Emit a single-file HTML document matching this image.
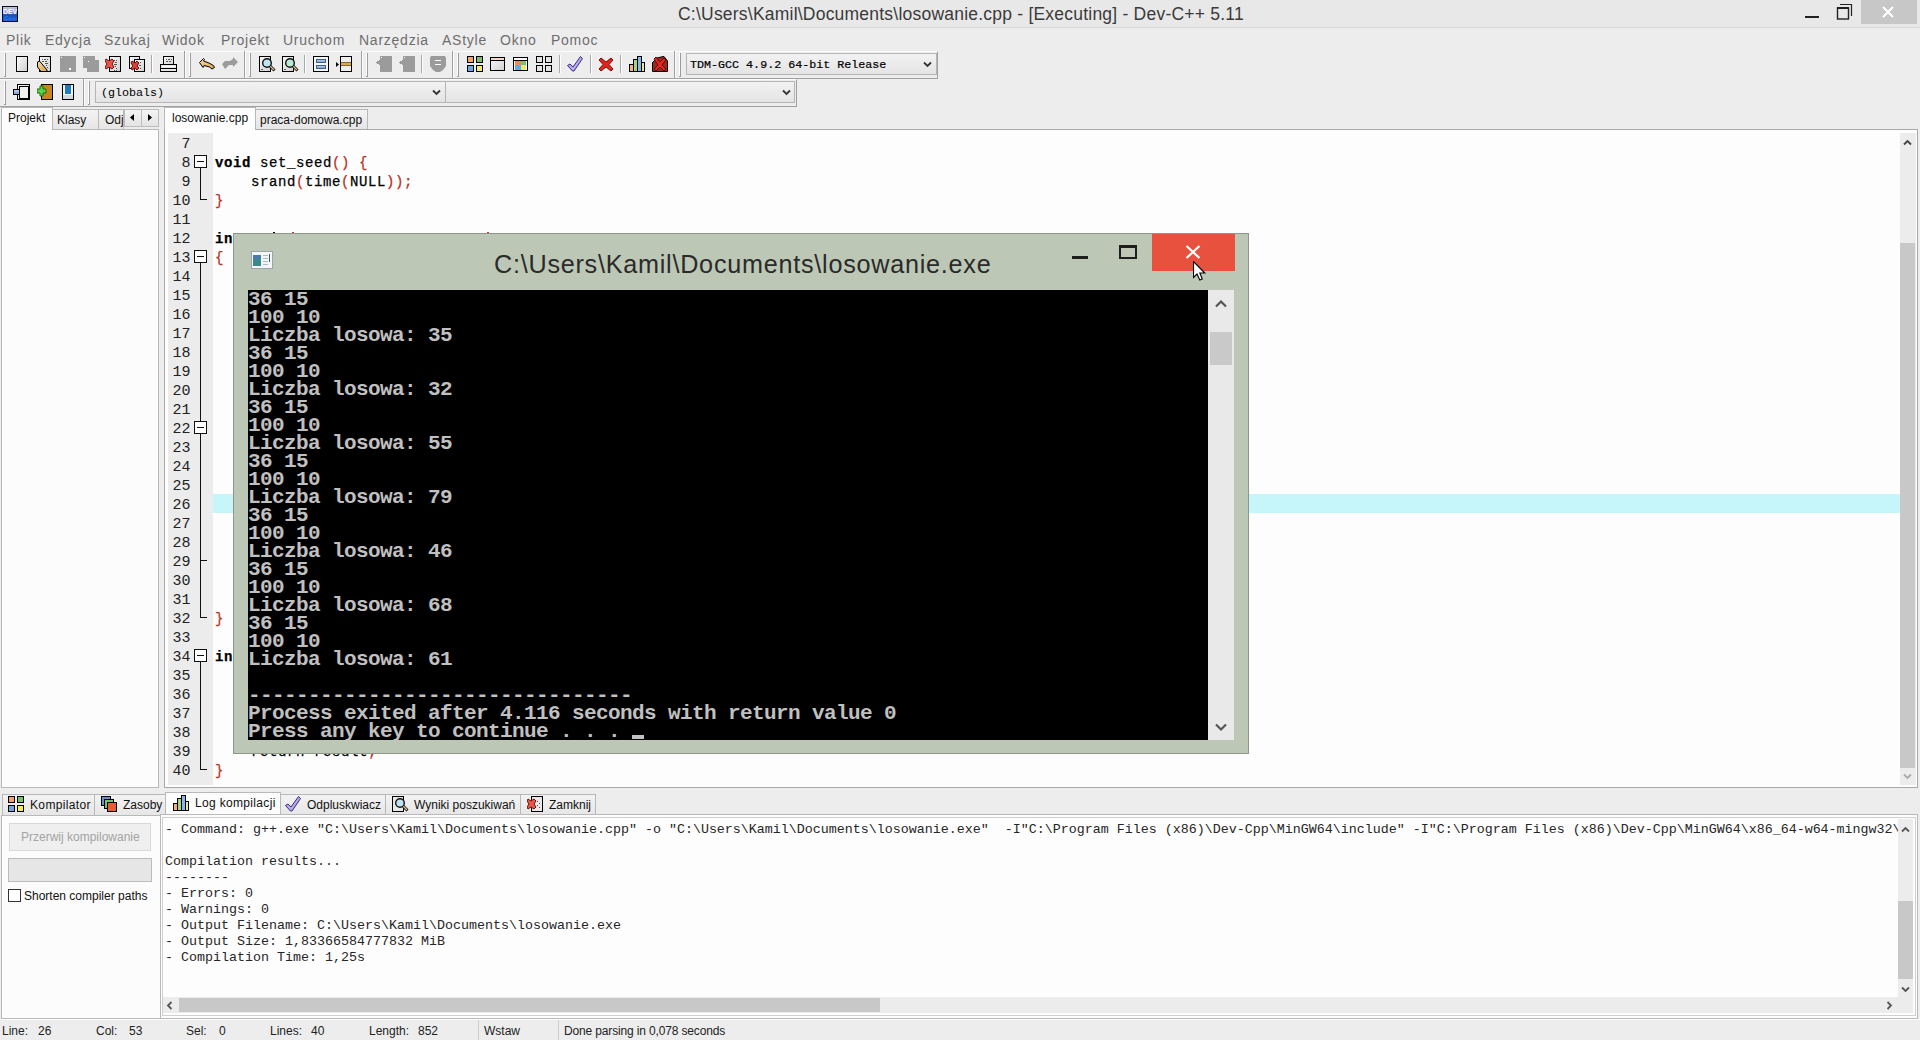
<!DOCTYPE html>
<html><head><meta charset="utf-8">
<style>
*{margin:0;padding:0;box-sizing:border-box}
html,body{width:1920px;height:1040px;overflow:hidden;background:#ededed;font-family:"Liberation Sans",sans-serif;font-size:12px;color:#000}
.a{position:absolute}
.t{position:absolute;white-space:pre;font-family:"Liberation Sans",sans-serif;line-height:1}
.m{position:absolute;white-space:pre;font-family:"Liberation Mono",monospace;line-height:1}
.menu{font-size:14px;letter-spacing:0.75px;color:#6d6d6d;top:33px}
.grip{position:absolute;width:3px;border-left:1px solid #fff;border-right:1px solid #a0a0a0;}
.sep{position:absolute;width:2px;border-left:1px solid #a9a9a9;border-right:1px solid #fff}
.ic{position:absolute;width:16px;height:16px}
.tab{position:absolute;background:linear-gradient(#f3f3f3,#e6e6e6);border:1px solid #b8b8b8;border-bottom:none}
.ln{position:absolute;left:168px;width:22.5px;text-align:right;font-family:"Liberation Mono",monospace;font-size:15px;letter-spacing:0px;line-height:19px;color:#222}
.code{position:absolute;left:215px;font-family:"Liberation Mono",monospace;font-size:14px;letter-spacing:0.6px;line-height:19px;white-space:pre;color:#000;-webkit-text-stroke:0.25px currentColor}
.r{color:#b8301c}
.b{font-weight:bold}
.con{position:absolute;left:248px;top:290px;width:960px;height:450px;background:#000;overflow:hidden;padding-top:1px;font-family:"Liberation Mono",monospace;font-weight:bold;font-size:21px;letter-spacing:-0.6px;line-height:18px;color:#c0c0c0;white-space:pre}
.log{position:absolute;left:165px;font-family:"Liberation Mono",monospace;font-size:13.33px;line-height:16px;white-space:pre;color:#262626}
.st{position:absolute;top:1025px;font-size:12px;color:#222;white-space:pre;line-height:1}
</style></head><body>
<!-- ============ TITLE BAR ============ -->
<div class="a" style="left:0;top:0;width:1920px;height:28px;background:#e8e8e8;border-bottom:1px solid #d6d6d6"></div>
<svg class="a" style="left:2px;top:6px" width="16" height="16" viewBox="0 0 16 16">
<defs><linearGradient id="devg" x1="0" y1="0" x2="0" y2="1"><stop offset="0" stop-color="#c8ccd8"/><stop offset="0.45" stop-color="#8090b8"/><stop offset="0.55" stop-color="#1a50b0"/><stop offset="1" stop-color="#1f6cd8"/></linearGradient></defs>
<rect x="0.5" y="0.5" width="15" height="15" fill="url(#devg)" stroke="#050a20"/>
<text x="8" y="7.6" font-family="Liberation Sans" font-size="6.8" font-weight="bold" fill="#fff" text-anchor="middle">DEV</text>
<text x="8" y="13.5" font-family="Liberation Sans" font-size="6" font-weight="bold" fill="#2a78e0" text-anchor="middle">C++</text>
</svg>
<div class="t" id="title" style="left:678px;top:6px;font-size:17.5px;letter-spacing:0.22px;color:#3a3a3a">C:\Users\Kamil\Documents\losowanie.cpp - [Executing] - Dev-C++ 5.11</div>
<div class="a" style="left:1805px;top:16px;width:14px;height:2px;background:#222"></div>
<svg class="a" style="left:1836px;top:3px" width="18" height="18" viewBox="0 0 18 18">
<path d="M4 1.5 H15.5 V13" fill="none" stroke="#222" stroke-width="1.2"/>
<rect x="1.5" y="5" width="11" height="11" fill="none" stroke="#222" stroke-width="1.4"/>
<rect x="1" y="4" width="12" height="2" fill="#222"/>
</svg>
<div class="a" style="left:1861px;top:0;width:56px;height:24px;background:#c7c7c7"></div>
<svg class="a" style="left:1880px;top:4px" width="16" height="16" viewBox="0 0 16 16"><path d="M3 3 L13 13 M13 3 L3 13" stroke="#fff" stroke-width="2"/></svg>

<!-- ============ MENU ============ -->
<div class="t menu" style="left:6px">Plik</div>
<div class="t menu" style="left:45px">Edycja</div>
<div class="t menu" style="left:104px">Szukaj</div>
<div class="t menu" style="left:162px">Widok</div>
<div class="t menu" style="left:221px">Projekt</div>
<div class="t menu" style="left:283px">Uruchom</div>
<div class="t menu" style="left:359px">Narzędzia</div>
<div class="t menu" style="left:442px">AStyle</div>
<div class="t menu" style="left:500px">Okno</div>
<div class="t menu" style="left:551px">Pomoc</div>

<!-- ============ TOOLBAR ROW 1 ============ -->
<div class="a" style="left:0;top:51px;width:938px;height:28px;border-top:1px solid #fcfcfc;border-bottom:1px solid #a0a0a0;border-right:1px solid #a0a0a0"></div>
<div class="a" style="left:0;top:79px;width:797px;height:28px;border-top:1px solid #fcfcfc;border-bottom:1px solid #a0a0a0;border-right:1px solid #a0a0a0"></div>
<div class="a" style="left:184px;top:51px;width:1px;height:27px;background:#a0a0a0"></div><div class="a" style="left:185px;top:51px;width:1px;height:27px;background:#fcfcfc"></div>
<div class="a" style="left:244px;top:51px;width:1px;height:27px;background:#a0a0a0"></div><div class="a" style="left:245px;top:51px;width:1px;height:27px;background:#fcfcfc"></div>
<div class="a" style="left:361px;top:51px;width:1px;height:27px;background:#a0a0a0"></div><div class="a" style="left:362px;top:51px;width:1px;height:27px;background:#fcfcfc"></div>
<div class="a" style="left:452px;top:51px;width:1px;height:27px;background:#a0a0a0"></div><div class="a" style="left:453px;top:51px;width:1px;height:27px;background:#fcfcfc"></div>
<div class="a" style="left:674px;top:51px;width:1px;height:27px;background:#a0a0a0"></div><div class="a" style="left:675px;top:51px;width:1px;height:27px;background:#fcfcfc"></div>
<div class="a" style="left:83px;top:79px;width:1px;height:27px;background:#a0a0a0"></div><div class="a" style="left:84px;top:79px;width:1px;height:27px;background:#fcfcfc"></div>
<div class="a" style="left:4px;top:53px;width:1px;height:23px;background:#fff"></div><div class="a" style="left:5px;top:53px;width:1px;height:24px;background:#9c9c9c"></div><div class="a" style="left:4px;top:76px;width:1px;height:1px;background:#9c9c9c"></div>
<div class="a" style="left:189px;top:53px;width:1px;height:23px;background:#fff"></div><div class="a" style="left:190px;top:53px;width:1px;height:24px;background:#9c9c9c"></div><div class="a" style="left:189px;top:76px;width:1px;height:1px;background:#9c9c9c"></div>
<div class="a" style="left:249px;top:53px;width:1px;height:23px;background:#fff"></div><div class="a" style="left:250px;top:53px;width:1px;height:24px;background:#9c9c9c"></div><div class="a" style="left:249px;top:76px;width:1px;height:1px;background:#9c9c9c"></div>
<div class="a" style="left:366px;top:53px;width:1px;height:23px;background:#fff"></div><div class="a" style="left:367px;top:53px;width:1px;height:24px;background:#9c9c9c"></div><div class="a" style="left:366px;top:76px;width:1px;height:1px;background:#9c9c9c"></div>
<div class="a" style="left:457px;top:53px;width:1px;height:23px;background:#fff"></div><div class="a" style="left:458px;top:53px;width:1px;height:24px;background:#9c9c9c"></div><div class="a" style="left:457px;top:76px;width:1px;height:1px;background:#9c9c9c"></div>
<div class="a" style="left:679px;top:53px;width:1px;height:23px;background:#fff"></div><div class="a" style="left:680px;top:53px;width:1px;height:24px;background:#9c9c9c"></div><div class="a" style="left:679px;top:76px;width:1px;height:1px;background:#9c9c9c"></div>
<div class="a" style="left:4px;top:81px;width:1px;height:23px;background:#fff"></div><div class="a" style="left:5px;top:81px;width:1px;height:24px;background:#9c9c9c"></div><div class="a" style="left:4px;top:104px;width:1px;height:1px;background:#9c9c9c"></div>
<div class="a" style="left:88px;top:81px;width:1px;height:23px;background:#fff"></div><div class="a" style="left:89px;top:81px;width:1px;height:24px;background:#9c9c9c"></div><div class="a" style="left:88px;top:104px;width:1px;height:1px;background:#9c9c9c"></div>
<div class="a" style="left:151px;top:55px;width:1px;height:18px;background:#a9a9a9"></div><div class="a" style="left:152px;top:55px;width:1px;height:18px;background:#fff"></div>
<div class="a" style="left:304px;top:55px;width:1px;height:18px;background:#a9a9a9"></div><div class="a" style="left:305px;top:55px;width:1px;height:18px;background:#fff"></div>
<div class="a" style="left:421px;top:55px;width:1px;height:18px;background:#a9a9a9"></div><div class="a" style="left:422px;top:55px;width:1px;height:18px;background:#fff"></div>
<div class="a" style="left:559px;top:55px;width:1px;height:18px;background:#a9a9a9"></div><div class="a" style="left:560px;top:55px;width:1px;height:18px;background:#fff"></div>
<div class="a" style="left:590px;top:55px;width:1px;height:18px;background:#a9a9a9"></div><div class="a" style="left:591px;top:55px;width:1px;height:18px;background:#fff"></div>
<div class="a" style="left:620px;top:55px;width:1px;height:18px;background:#a9a9a9"></div><div class="a" style="left:621px;top:55px;width:1px;height:18px;background:#fff"></div>
<svg width="0" height="0" style="position:absolute"><defs><linearGradient id="gd" x1="0" y1="0" x2="1" y2="1"><stop offset="0" stop-color="#fafafa"/><stop offset="1" stop-color="#cfcfcf"/></linearGradient></defs><defs>
<linearGradient id="gbl" x1="0" y1="0" x2="0" y2="1"><stop offset="0" stop-color="#c9dcf2"/><stop offset="1" stop-color="#6e95c4"/></linearGradient>
<linearGradient id="gtan" x1="0" y1="0" x2="1" y2="1"><stop offset="0" stop-color="#f6dba8"/><stop offset="1" stop-color="#d9a24c"/></linearGradient>
</defs></svg>
<svg class="a" style="left:16px;top:56px" width="12" height="16" viewBox="0 0 12 16" shape-rendering="crispEdges"><rect x="0.5" y="0.5" width="11" height="15" fill="url(#gd)" stroke="#000"/><rect x="1" y="1" width="1" height="14" fill="#fff"/></svg>
<svg class="a" style="left:37px;top:56px" width="14" height="16" viewBox="0 0 14 16" shape-rendering="crispEdges"><rect x="2.5" y="0.5" width="11" height="15" fill="url(#gd)" stroke="#000"/><rect x="5" y="3" width="1" height="1" fill="#555"/><rect x="7" y="3" width="2" height="1" fill="#555"/><rect x="10" y="3" width="1" height="1" fill="#555"/><rect x="5" y="5" width="2" height="1" fill="#555"/><rect x="8" y="5" width="2" height="1" fill="#555"/><rect x="8" y="7" width="2" height="1" fill="#555"/><rect x="10" y="7" width="1" height="1" fill="#555"/><rect x="9" y="9" width="1" height="1" fill="#555"/><rect x="10" y="11" width="1" height="1" fill="#555"/><path d="M0.5 6 L2.5 5 L10 14 L10 15.5 L4 15.5 L0.5 11 Z" fill="url(#gtan)" stroke="#000" shape-rendering="auto"/></svg>
<svg class="a" style="left:60px;top:56px" width="16" height="16" viewBox="0 0 16 16" shape-rendering="crispEdges"><rect x="0" y="0" width="16" height="16" fill="#9b9b9b"/><rect x="1" y="1" width="1" height="1" fill="#fff"/><rect x="9" y="12" width="2" height="2" fill="#fff"/></svg>
<svg class="a" style="left:83px;top:56px" width="16" height="16" viewBox="0 0 16 16" shape-rendering="crispEdges"><rect x="0" y="0" width="12" height="12" fill="#9b9b9b"/><rect x="4" y="4" width="12" height="12" fill="#9b9b9b"/><rect x="1" y="1" width="1" height="1" fill="#fff"/><rect x="5" y="5" width="1" height="1" fill="#fff"/></svg>
<svg class="a" style="left:105px;top:56px" width="16" height="16" viewBox="0 0 16 16" shape-rendering="crispEdges"><rect x="4.5" y="0.5" width="11" height="15" fill="url(#gd)" stroke="#000"/><rect x="9" y="4" width="1" height="1" fill="#555"/><rect x="11" y="4" width="1" height="1" fill="#555"/><rect x="10" y="6" width="2" height="1" fill="#555"/><rect x="9" y="8" width="2" height="1" fill="#555"/><rect x="11" y="8" width="1" height="1" fill="#555"/><rect x="10" y="10" width="1" height="1" fill="#555"/><rect x="11" y="12" width="1" height="1" fill="#555"/><rect x="9" y="14" width="1" height="1" fill="#555"/><rect x="11" y="14" width="1" height="1" fill="#555"/><path d="M1 3 L4 5 L7 3 L9 5 L7 8 L9 11 L7 13 L4 11 L1 13 L0 11 L2 8 L0 5 Z" fill="#e8574a" stroke="#6b0f0f" shape-rendering="auto"/></svg>
<svg class="a" style="left:129px;top:56px" width="16" height="16" viewBox="0 0 16 16" shape-rendering="crispEdges"><rect x="0.5" y="0.5" width="10" height="12" fill="url(#gd)" stroke="#000"/><rect x="5.5" y="3.5" width="10" height="12" fill="url(#gd)" stroke="#000"/><rect x="9" y="6" width="1" height="1" fill="#555"/><rect x="11" y="6" width="1" height="1" fill="#555"/><rect x="10" y="9" width="2" height="1" fill="#555"/><rect x="9" y="12" width="1" height="1" fill="#555"/><rect x="11" y="12" width="1" height="1" fill="#555"/><path d="M3 5 L6 7 L8 5 L10 7 L8 10 L10 12 L8 14 L6 12 L3 14 L2 12 L4 10 L2 7 Z" fill="#d94235" stroke="#6b0f0f" shape-rendering="auto"/></svg>
<svg class="a" style="left:160px;top:56px" width="17" height="16" viewBox="0 0 17 16" shape-rendering="crispEdges"><rect x="3.5" y="0.5" width="10" height="9" fill="url(#gd)" stroke="#000"/><rect x="6" y="3" width="1" height="1" fill="#555"/><rect x="8" y="3" width="2" height="1" fill="#555"/><rect x="11" y="3" width="1" height="1" fill="#555"/><rect x="6" y="5" width="2" height="1" fill="#555"/><rect x="9" y="5" width="2" height="1" fill="#555"/><rect x="0.5" y="8.5" width="16" height="7" rx="1" fill="#e6e6e6" stroke="#000"/><rect x="1" y="12" width="15" height="1" fill="#000"/><rect x="2" y="10" width="13" height="1" fill="#fff"/></svg>
<svg class="a" style="left:199px;top:58px" width="16" height="12" viewBox="0 0 16 12" shape-rendering="crispEdges"><path d="M0.5 4.5 L4.5 0.5 L5.5 1.5 L4.5 3 L10 5 L14.5 7.5 L15.5 9.5 L13 11 L10.5 9 L5 7.5 L4.5 9 L4 9.5 Z" fill="url(#gtan)" stroke="#000" shape-rendering="auto"/></svg>
<svg class="a" style="left:222px;top:57px" width="16" height="13" viewBox="0 0 16 13" shape-rendering="crispEdges"><path d="M0 7 L3 4 L8 4 L11 2 L11 0 L16 5 L11 10 L11 8 L7 8 L3 12 Z" fill="#9b9b9b" shape-rendering="auto"/></svg>
<svg class="a" style="left:259px;top:56px" width="17" height="16" viewBox="0 0 17 16" shape-rendering="crispEdges"><rect x="0.5" y="0.5" width="11" height="15" fill="url(#gd)" stroke="#000"/><rect x="2" y="13" width="2" height="1" fill="#555"/><circle cx="8" cy="7" r="4.3" fill="#bfe3f2" stroke="#111" stroke-width="1.4" shape-rendering="auto"/><path d="M11 10 L15.5 14.5" stroke="#000" stroke-width="2.8" shape-rendering="auto"/><path d="M11.3 10.3 L15 14" stroke="#e0c08a" stroke-width="1.4" shape-rendering="auto"/></svg>
<svg class="a" style="left:282px;top:56px" width="17" height="16" viewBox="0 0 17 16" shape-rendering="crispEdges"><rect x="0.5" y="0.5" width="11" height="15" fill="url(#gd)" stroke="#000"/><rect x="2" y="13" width="2" height="1" fill="#555"/><circle cx="8" cy="7" r="4.3" fill="#b9ead6" stroke="#111" stroke-width="1.4" shape-rendering="auto"/><path d="M11 10 L15.5 14.5" stroke="#000" stroke-width="2.8" shape-rendering="auto"/><path d="M11.3 10.3 L15 14" stroke="#e0c08a" stroke-width="1.4" shape-rendering="auto"/></svg>
<svg class="a" style="left:313px;top:56px" width="16" height="16" viewBox="0 0 16 16" shape-rendering="crispEdges"><rect x="0.5" y="0.5" width="15" height="15" fill="#f5f5f5" stroke="#000"/><rect x="3.5" y="3.5" width="9" height="3" fill="url(#gbl)" stroke="#3d5f8a"/><rect x="3.5" y="9.5" width="9" height="3" fill="url(#gbl)" stroke="#3d5f8a"/></svg>
<svg class="a" style="left:336px;top:56px" width="16" height="16" viewBox="0 0 16 16" shape-rendering="crispEdges"><path d="M0 6 L3 8.5 L0 11 Z" fill="#000" shape-rendering="auto"/><rect x="4.5" y="0.5" width="11" height="15" fill="#eeeeee" stroke="#000"/><rect x="5" y="6" width="10" height="4" fill="#d9a84a"/><rect x="5" y="6" width="10" height="1" fill="#8a6a2a"/><rect x="5" y="9" width="10" height="1" fill="#8a6a2a"/></svg>
<svg class="a" style="left:376px;top:56px" width="16" height="16" viewBox="0 0 16 16" shape-rendering="crispEdges"><path d="M4 0 H16 V16 H4 V9 L1 8 L0 7 L0 6 L1 5 L4 4 Z" fill="#9b9b9b"/><rect x="5" y="1" width="1" height="1" fill="#fff"/></svg>
<svg class="a" style="left:399px;top:56px" width="16" height="16" viewBox="0 0 16 16" shape-rendering="crispEdges"><path d="M4 0 H16 V16 H4 V9 L1 8 L0 7 L0 6 L1 5 L4 4 Z" fill="#9b9b9b"/><rect x="5" y="1" width="1" height="1" fill="#fff"/></svg>
<svg class="a" style="left:430px;top:56px" width="16" height="16" viewBox="0 0 16 16" shape-rendering="crispEdges"><path d="M1 0 H15 L16 2 V10 L13 14 L10 16 H6 L3 14 L0 10 V2 Z" fill="#9b9b9b" shape-rendering="auto"/><rect x="5" y="4" width="6" height="1" fill="#fff"/><rect x="5" y="8" width="6" height="1" fill="#fff"/></svg>
<svg class="a" style="left:467px;top:56px" width="16" height="16" viewBox="0 0 16 16" shape-rendering="crispEdges"><rect x="0.5" y="0.5" width="6" height="6" fill="#f2a36a" stroke="#000"/><rect x="9.5" y="0.5" width="6" height="6" fill="#7cc06a" stroke="#000"/><rect x="0.5" y="9.5" width="6" height="6" fill="#6aa6e0" stroke="#000"/><rect x="9.5" y="9.5" width="6" height="6" fill="#f2ea6a" stroke="#000"/></svg>
<svg class="a" style="left:490px;top:57px" width="15" height="14" viewBox="0 0 15 14" shape-rendering="crispEdges"><rect x="0.5" y="0.5" width="14" height="13" fill="url(#gd)" stroke="#000"/><rect x="1" y="1" width="13" height="2" fill="#f6d8c8"/><rect x="1" y="3" width="13" height="1" fill="#000"/></svg>
<svg class="a" style="left:513px;top:57px" width="15" height="14" viewBox="0 0 15 14" shape-rendering="crispEdges"><rect x="0.5" y="0.5" width="14" height="13" fill="#fff" stroke="#000"/><rect x="1" y="3" width="13" height="1" fill="#000"/><rect x="2" y="4" width="6" height="4" fill="#f08a5a"/><rect x="8" y="4" width="5" height="4" fill="#7cc06a"/><rect x="2" y="8" width="6" height="5" fill="#6aa6e0"/><rect x="8" y="8" width="5" height="5" fill="#f2ea6a"/></svg>
<svg class="a" style="left:536px;top:56px" width="16" height="16" viewBox="0 0 16 16" shape-rendering="crispEdges"><rect x="0.5" y="0.5" width="6" height="6" fill="#e4e4e4" stroke="#000"/><rect x="9.5" y="0.5" width="6" height="6" fill="#e4e4e4" stroke="#000"/><rect x="0.5" y="9.5" width="6" height="6" fill="#e4e4e4" stroke="#000"/><rect x="9.5" y="9.5" width="6" height="6" fill="#e4e4e4" stroke="#000"/></svg>
<svg class="a" style="left:567px;top:56px" width="16" height="16" viewBox="0 0 16 16" shape-rendering="crispEdges"><path d="M0.5 9.5 L3 8 L6 11 L13.5 0.5 L15.5 2.5 L7 15 L5.5 15 Z" fill="#b7a9ee" stroke="#3b2a7a" shape-rendering="auto"/></svg>
<svg class="a" style="left:598px;top:57px" width="16" height="15" viewBox="0 0 16 15" shape-rendering="crispEdges"><path d="M1 3 L3 1 L8 5 L13 1 L15 3 L11 7.5 L15 12 L13 14 L8 10 L3 14 L1 12 L5 7.5 Z" fill="#e0261b" stroke="#7a0e0a" shape-rendering="auto"/></svg>
<svg class="a" style="left:629px;top:56px" width="16" height="16" viewBox="0 0 16 16" shape-rendering="crispEdges"><rect x="0.5" y="8.5" width="4" height="7" fill="#f0b080" stroke="#000"/><rect x="4.5" y="3.5" width="4" height="12" fill="#a8d08a" stroke="#000"/><rect x="8.5" y="0.5" width="4" height="15" fill="#88b8e8" stroke="#000"/><rect x="12.5" y="6.5" width="3" height="9" fill="#f0e890" stroke="#000"/></svg>
<svg class="a" style="left:652px;top:56px" width="16" height="16" viewBox="0 0 16 16" shape-rendering="crispEdges"><path d="M0.5 6.5 L5 2 L9 1 L12 0.5 L15.5 5 L15.5 15.5 L0.5 15.5 Z" fill="#9b2a20" stroke="#000" shape-rendering="auto"/><path d="M2 3 L4 1 L8 6 L12 2 L14 4 L10 9 L14 13 L12 15 L8 11 L4 15 L2 13 L6 9 Z" fill="#e8261c" stroke="#5a0a06" shape-rendering="auto"/></svg>
<svg class="a" style="left:13px;top:84px" width="17" height="16" viewBox="0 0 17 16" shape-rendering="crispEdges"><rect x="4.5" y="0.5" width="12" height="15" fill="url(#gd)" stroke="#000"/><rect x="6" y="2" width="9" height="12" fill="#f0f0f0" stroke="#000" stroke-width="1"/><rect x="0.5" y="5.5" width="6" height="5" fill="url(#gbl)" stroke="#000"/></svg>
<svg class="a" style="left:37px;top:84px" width="16" height="16" viewBox="0 0 16 16" shape-rendering="crispEdges"><rect x="4.5" y="0.5" width="11" height="15" fill="#c8861e" stroke="#000"/><path d="M3 2 H6 V5 H9 V9 H6 V12 H3 V9 H0 V5 H3 Z" fill="#5ad24a" stroke="#1a6a12" shape-rendering="auto"/></svg>
<svg class="a" style="left:62px;top:84px" width="12" height="16" viewBox="0 0 12 16" shape-rendering="crispEdges"><rect x="0.5" y="0.5" width="11" height="15" fill="#f4f4f4" stroke="#000"/><rect x="3" y="1" width="6" height="9" fill="#1f7ac0"/><rect x="1" y="11" width="10" height="4" fill="#d0d8e0"/></svg>
<!-- compiler combobox -->
<div class="a" style="left:686px;top:53px;width:251px;height:22px;border:1px solid #b5b5b5;background:linear-gradient(#f2f2f2,#e4e4e4)"></div>
<div class="m" id="tdm" style="left:690px;top:60px;font-size:11.7px;color:#000;-webkit-text-stroke:0.2px #000">TDM-GCC 4.9.2 64-bit Release</div>
<svg class="a" style="left:923px;top:61px" width="9" height="7" viewBox="0 0 9 7"><path d="M1 1.5 L4.5 5 L8 1.5" fill="none" stroke="#333" stroke-width="1.8"/></svg>
<!-- row2 combos -->
<div class="a" style="left:95px;top:81px;width:351px;height:22px;border:1px solid #b5b5b5;background:linear-gradient(#f2f2f2,#e4e4e4)"></div>
<div class="a" style="left:445px;top:81px;width:350px;height:22px;border:1px solid #b5b5b5;background:linear-gradient(#f2f2f2,#e4e4e4)"></div>
<div class="m" id="glob" style="left:101px;top:88px;font-size:11.7px;color:#000">(globals)</div>
<svg class="a" style="left:432px;top:89px" width="9" height="7" viewBox="0 0 9 7"><path d="M1 1.5 L4.5 5 L8 1.5" fill="none" stroke="#333" stroke-width="1.8"/></svg>
<svg class="a" style="left:782px;top:89px" width="9" height="7" viewBox="0 0 9 7"><path d="M1 1.5 L4.5 5 L8 1.5" fill="none" stroke="#333" stroke-width="1.8"/></svg>

<!-- ============ LEFT PANEL ============ -->
<div class="a" style="left:1px;top:129px;width:158px;height:659px;background:#fcfcfc;border:1px solid #b9b9b9"></div>
<div class="a" style="left:1px;top:107px;width:52px;height:23px;background:#fcfcfc;border:1px solid #b9b9b9;border-bottom:none"></div>
<div class="tab" style="left:52px;top:109px;width:47px;height:20px"></div>
<div class="tab" style="left:98px;top:109px;width:26px;height:20px"></div>
<div class="t" id="projekt" style="left:8px;top:112px;font-size:12px;color:#111">Projekt</div>
<div class="t" style="left:57px;top:114px;font-size:12px;color:#111">Klasy</div>
<div class="a" style="left:99px;top:110px;width:24px;height:19px;overflow:hidden"><div class="t" style="left:6px;top:4px;font-size:12px;color:#111">Odj</div></div>
<div class="a" style="left:124px;top:109px;width:18px;height:18px;border:1px solid #bcbcbc;background:linear-gradient(#f4f4f4,#e4e4e4)"></div>
<div class="a" style="left:141px;top:109px;width:18px;height:18px;border:1px solid #bcbcbc;background:linear-gradient(#f4f4f4,#e4e4e4)"></div>
<svg class="a" style="left:130px;top:114px" width="5" height="7"><path d="M4 0 L0 3.5 L4 7 Z" fill="#000"/></svg>
<svg class="a" style="left:148px;top:114px" width="5" height="7"><path d="M0 0 L4 3.5 L0 7 Z" fill="#000"/></svg>

<!-- ============ EDITOR ============ -->
<div class="a" style="left:164px;top:129px;width:1754px;height:659px;background:#fdfdfd;border:1px solid #a9a9a9"></div>
<div class="a" style="left:164px;top:107px;width:92px;height:23px;background:#fdfdfd;border:1px solid #b9b9b9;border-bottom:none"></div>
<div class="tab" style="left:255px;top:109px;width:113px;height:20px"></div>
<div class="t" id="losow" style="left:172px;top:112px;font-size:12px;color:#111">losowanie.cpp</div>
<div class="t" id="praca" style="left:260px;top:114px;font-size:12px;color:#111">praca-domowa.cpp</div>
<div class="a" style="left:168px;top:133px;width:45px;height:652px;background:#ececec"></div>
<div class="a" style="left:213px;top:494px;width:1687px;height:19px;background:#c6f5fa"></div>
<!-- scrollbar -->
<div class="a" style="left:1900px;top:133px;width:16px;height:652px;background:#ececec"></div>
<div class="a" style="left:1900px;top:243px;width:15px;height:525px;background:#c8c8c8"></div>
<svg class="a" style="left:1903px;top:139px" width="9" height="7"><path d="M1 5.5 L4.5 2 L8 5.5" fill="none" stroke="#444" stroke-width="1.8"/></svg>
<svg class="a" style="left:1903px;top:773px" width="9" height="7"><path d="M1 1.5 L4.5 5 L8 1.5" fill="none" stroke="#aaa" stroke-width="1.8"/></svg>
<div class="ln" style="top:135px">7</div>
<div class="ln" style="top:154px">8</div>
<div class="ln" style="top:173px">9</div>
<div class="ln" style="top:192px">10</div>
<div class="ln" style="top:211px">11</div>
<div class="ln" style="top:230px">12</div>
<div class="ln" style="top:249px">13</div>
<div class="ln" style="top:268px">14</div>
<div class="ln" style="top:287px">15</div>
<div class="ln" style="top:306px">16</div>
<div class="ln" style="top:325px">17</div>
<div class="ln" style="top:344px">18</div>
<div class="ln" style="top:363px">19</div>
<div class="ln" style="top:382px">20</div>
<div class="ln" style="top:401px">21</div>
<div class="ln" style="top:420px">22</div>
<div class="ln" style="top:439px">23</div>
<div class="ln" style="top:458px">24</div>
<div class="ln" style="top:477px">25</div>
<div class="ln" style="top:496px">26</div>
<div class="ln" style="top:515px">27</div>
<div class="ln" style="top:534px">28</div>
<div class="ln" style="top:553px">29</div>
<div class="ln" style="top:572px">30</div>
<div class="ln" style="top:591px">31</div>
<div class="ln" style="top:610px">32</div>
<div class="ln" style="top:629px">33</div>
<div class="ln" style="top:648px">34</div>
<div class="ln" style="top:667px">35</div>
<div class="ln" style="top:686px">36</div>
<div class="ln" style="top:705px">37</div>
<div class="ln" style="top:724px">38</div>
<div class="ln" style="top:743px">39</div>
<div class="ln" style="top:762px">40</div>
<div class="code" style="top:154px"><span class="b">void</span> set_seed<span class="r">()</span> <span class="r">{</span></div>
<div class="code" style="top:173px">    srand<span class="r">(</span>time<span class="r">(</span>NULL<span class="r">));</span></div>
<div class="code" style="top:192px"><span class="r">}</span></div>
<div class="code" style="top:230px"><span class="b">in</span></div>
<div class="code" style="top:249px"><span class="r">{</span></div>
<div class="code" style="top:610px"><span class="r">}</span></div>
<div class="code" style="top:648px"><span class="b">in</span></div>
<div class="code" style="top:743px">    return result<span class="r">;</span></div>
<div class="code" style="top:762px"><span class="r">}</span></div>
<div class="a" style="left:273px;top:232px;width:2px;height:1px;background:#000"></div><div class="a" style="left:292px;top:232px;width:2px;height:1px;background:#c0392b"></div><div class="a" style="left:487px;top:232px;width:2px;height:1px;background:#c0392b"></div>
<div class="a" style="left:194px;top:155px;width:13px;height:13px;border:1px solid #111;background:#fff"></div><div class="a" style="left:197px;top:161px;width:7px;height:1px;background:#111"></div>
<div class="a" style="left:200px;top:168px;width:1px;height:32px;background:#111"></div>
<div class="a" style="left:200px;top:199px;width:7px;height:1px;background:#111"></div>
<div class="a" style="left:194px;top:250px;width:13px;height:13px;border:1px solid #111;background:#fff"></div><div class="a" style="left:197px;top:256px;width:7px;height:1px;background:#111"></div>
<div class="a" style="left:200px;top:263px;width:1px;height:158px;background:#111"></div>
<div class="a" style="left:194px;top:421px;width:13px;height:13px;border:1px solid #111;background:#fff"></div><div class="a" style="left:197px;top:427px;width:7px;height:1px;background:#111"></div>
<div class="a" style="left:200px;top:434px;width:1px;height:184px;background:#111"></div>
<div class="a" style="left:200px;top:560px;width:7px;height:1px;background:#111"></div>
<div class="a" style="left:200px;top:617px;width:7px;height:1px;background:#111"></div>
<div class="a" style="left:194px;top:649px;width:13px;height:13px;border:1px solid #111;background:#fff"></div><div class="a" style="left:197px;top:655px;width:7px;height:1px;background:#111"></div>
<div class="a" style="left:200px;top:662px;width:1px;height:108px;background:#111"></div>
<div class="a" style="left:200px;top:769px;width:7px;height:1px;background:#111"></div>
<!-- ============ CONSOLE ============ -->
<div class="a" style="left:233px;top:233px;width:1016px;height:521px;background:#bdc7b5;border:1px solid #8d9888"></div>
<svg class="a" style="left:251px;top:251px" width="22" height="18" viewBox="0 0 22 18" shape-rendering="crispEdges">
<rect x="0.5" y="0.5" width="21" height="17" fill="#f4f6f8" stroke="#9aa4ac"/>
<rect x="2" y="4" width="8" height="11" fill="#3a8a8a"/><rect x="2" y="4" width="8" height="4" fill="#4a7ab0"/>
<rect x="12" y="4" width="5" height="1" fill="#b0b8c0"/><rect x="12" y="7" width="5" height="1" fill="#b0b8c0"/><rect x="12" y="10" width="5" height="1" fill="#b0b8c0"/><rect x="12" y="13" width="5" height="1" fill="#b0b8c0"/>
<rect x="18" y="3" width="1" height="8" fill="#3a5a8a"/>
</svg>
<div class="t" id="ctitle" style="left:494px;top:252px;font-size:25.2px;letter-spacing:0.75px;color:#2a2a2a">C:\Users\Kamil\Documents\losowanie.exe</div>
<div class="a" style="left:1072px;top:256px;width:16px;height:3px;background:#1e1e1e"></div>
<div class="a" style="left:1119px;top:245px;width:18px;height:14px;border:2px solid #1e1e1e;border-top-width:3px"></div>
<div class="a" style="left:1152px;top:234px;width:83px;height:37px;background:#e8513d"></div>
<svg class="a" style="left:1185px;top:245px" width="16" height="14" viewBox="0 0 16 14"><path d="M1.5 1 L14.5 13 M14.5 1 L1.5 13" stroke="#fff" stroke-width="2.2"/></svg>
<div class="con">36 15
100 10
Liczba losowa: 35
36 15
100 10
Liczba losowa: 32
36 15
100 10
Liczba losowa: 55
36 15
100 10
Liczba losowa: 79
36 15
100 10
Liczba losowa: 46
36 15
100 10
Liczba losowa: 68
36 15
100 10
Liczba losowa: 61

--------------------------------
Process exited after 4.116 seconds with return value 0
Press any key to continue . . . </div>
<div class="a" style="left:632px;top:735px;width:12px;height:4px;background:#c0c0c0"></div>
<div class="a" style="left:1208px;top:290px;width:26px;height:450px;background:#e9e9e9"></div>
<div class="a" style="left:1210px;top:332px;width:22px;height:33px;background:#c9c9c9"></div>
<svg class="a" style="left:1215px;top:299px" width="12" height="9"><path d="M1 7.5 L6 2.5 L11 7.5" fill="none" stroke="#555" stroke-width="2.2"/></svg>
<svg class="a" style="left:1215px;top:723px" width="12" height="9"><path d="M1 1.5 L6 6.5 L11 1.5" fill="none" stroke="#555" stroke-width="2.2"/></svg>
<!-- mouse cursor -->
<svg class="a" style="left:1193px;top:261px" width="14" height="21" viewBox="0 0 14 21"><path d="M0.5 0.5 L0.5 16.5 L4 13 L6.8 19 L9.3 18 L6.8 12 L11.8 12 Z" fill="#fff" stroke="#000" stroke-width="1.1"/></svg>
<!-- ============ BOTTOM ============ -->
<div class="a" style="left:1px;top:815px;width:1917px;height:204px;background:#fcfcfc;border:1px solid #b9b9b9"></div>
<div class="tab" style="left:2px;top:794px;width:93px;height:21px"></div>
<div class="t" style="left:30px;top:799px;font-size:12px;letter-spacing:0.35px;color:#111">Kompilator</div>
<div class="tab" style="left:94px;top:794px;width:72px;height:21px"></div>
<div class="t" style="left:123px;top:799px;font-size:12px;letter-spacing:0;color:#111">Zasoby</div>
<div class="a" style="left:165px;top:792px;width:116px;height:25px;background:#fcfcfc;border:1px solid #b9b9b9;border-bottom:none"></div>
<div class="t" style="left:195px;top:797px;font-size:12px;letter-spacing:0.33px;color:#111">Log kompilacji</div>
<div class="tab" style="left:280px;top:794px;width:106px;height:21px"></div>
<div class="t" style="left:307px;top:799px;font-size:12px;letter-spacing:0;color:#111">Odpluskwiacz</div>
<div class="tab" style="left:385px;top:794px;width:136px;height:21px"></div>
<div class="t" style="left:414px;top:799px;font-size:12px;letter-spacing:0;color:#111">Wyniki poszukiwań</div>
<div class="tab" style="left:520px;top:794px;width:76px;height:21px"></div>
<div class="t" style="left:549px;top:799px;font-size:12px;letter-spacing:0;color:#111">Zamknij</div>
<svg class="a" style="left:8px;top:796px" width="16" height="16" viewBox="0 0 16 16" shape-rendering="crispEdges"><rect x="0.5" y="0.5" width="6" height="6" fill="#f2a36a" stroke="#000"/><rect x="9.5" y="0.5" width="6" height="6" fill="#7cc06a" stroke="#000"/><rect x="0.5" y="9.5" width="6" height="6" fill="#6aa6e0" stroke="#000"/><rect x="9.5" y="9.5" width="6" height="6" fill="#f2ea6a" stroke="#000"/></svg>
<svg class="a" style="left:101px;top:796px" width="16" height="16" viewBox="0 0 16 16" shape-rendering="crispEdges"><rect x="0.5" y="0.5" width="9" height="9" fill="#6a8fd0" stroke="#000"/><rect x="3.5" y="3.5" width="9" height="9" fill="#7cc06a" stroke="#000"/><rect x="6.5" y="6.5" width="9" height="9" fill="#e85a3a" stroke="#000"/></svg>
<svg class="a" style="left:173px;top:795px" width="16" height="16" viewBox="0 0 16 16" shape-rendering="crispEdges"><rect x="0.5" y="8.5" width="4" height="7" fill="#f0b080" stroke="#000"/><rect x="4.5" y="3.5" width="4" height="12" fill="#a8d08a" stroke="#000"/><rect x="8.5" y="0.5" width="4" height="15" fill="#88b8e8" stroke="#000"/><rect x="12.5" y="6.5" width="3" height="9" fill="#f0e890" stroke="#000"/></svg>
<svg class="a" style="left:285px;top:796px" width="16" height="16" viewBox="0 0 16 16" shape-rendering="crispEdges"><path d="M0.5 9.5 L3 8 L6 11 L13.5 0.5 L15.5 2.5 L7 15 L5.5 15 Z" fill="#b7a9ee" stroke="#3b2a7a" shape-rendering="auto"/></svg>
<svg class="a" style="left:392px;top:796px" width="17" height="16" viewBox="0 0 17 16" shape-rendering="crispEdges"><rect x="0.5" y="0.5" width="11" height="15" fill="#e8e8e8" stroke="#000"/><circle cx="8" cy="7" r="4.3" fill="#bfe3f2" stroke="#111" stroke-width="1.4" shape-rendering="auto"/><path d="M11 10 L15.5 14.5" stroke="#000" stroke-width="2.8" shape-rendering="auto"/><path d="M11.3 10.3 L15 14" stroke="#e0c08a" stroke-width="1.4" shape-rendering="auto"/></svg>
<svg class="a" style="left:527px;top:796px" width="16" height="16" viewBox="0 0 16 16" shape-rendering="crispEdges"><rect x="4.5" y="0.5" width="11" height="15" fill="#e8e8e8" stroke="#000"/><rect x="10" y="5" width="1" height="1" fill="#555"/><rect x="12" y="7" width="1" height="1" fill="#555"/><rect x="10" y="9" width="1" height="1" fill="#555"/><rect x="12" y="11" width="1" height="1" fill="#555"/><path d="M1 3 L4 5 L7 3 L9 5 L7 8 L9 11 L7 13 L4 11 L1 13 L0 11 L2 8 L0 5 Z" fill="#e8574a" stroke="#6b0f0f" shape-rendering="auto"/></svg>
<div class="a" style="left:9px;top:823px;width:142px;height:28px;background:#efefef;border:1px solid #d9d9d9"></div>
<div class="t" id="przerwij" style="left:21px;top:831px;font-size:12px;color:#a3a3a3">Przerwij kompilowanie</div>
<div class="a" style="left:8px;top:858px;width:144px;height:24px;background:#e6e6e6;border:1px solid #bcbcbc"></div>
<div class="a" style="left:8px;top:889px;width:13px;height:13px;background:#fff;border:1px solid #333"></div>
<div class="t" id="shorten" style="left:24px;top:890px;font-size:12px;color:#111">Shorten compiler paths</div>
<div class="a" style="left:160px;top:814px;width:1758px;height:205px;background:#fdfdfd;border:1px solid #b9b9b9"></div>
<div class="a" style="left:162px;top:817px;width:1754px;height:199px;background:#fdfdfd;border:1px solid #d0d0d0"></div>
<div class="a" style="left:163px;top:818px;width:1735px;height:180px;overflow:hidden"><div class="log" id="log" style="left:2px;top:3.5px">- Command: g++.exe "C:\Users\Kamil\Documents\losowanie.cpp" -o "C:\Users\Kamil\Documents\losowanie.exe"  -I"C:\Program Files (x86)\Dev-Cpp\MinGW64\include" -I"C:\Program Files (x86)\Dev-Cpp\MinGW64\x86_64-w64-mingw32\include" -I"C:\Program Files (x86)\Dev-Cpp\MinGW64\lib\gcc"

Compilation results...
--------
- Errors: 0
- Warnings: 0
- Output Filename: C:\Users\Kamil\Documents\losowanie.exe
- Output Size: 1,83366584777832 MiB
- Compilation Time: 1,25s</div></div>
<div class="a" style="left:1898px;top:819px;width:15px;height:178px;background:#ececec"></div>
<div class="a" style="left:1898px;top:901px;width:15px;height:78px;background:#c8c8c8"></div>
<svg class="a" style="left:1901px;top:826px" width="9" height="7" viewBox="0 0 9 7" shape-rendering="crispEdges"><path d="M1 5.5 L4.5 2 L8 5.5" fill="none" stroke="#555" stroke-width="1.8" shape-rendering="auto"/></svg>
<svg class="a" style="left:1901px;top:986px" width="9" height="7" viewBox="0 0 9 7" shape-rendering="crispEdges"><path d="M1 1.5 L4.5 5 L8 1.5" fill="none" stroke="#555" stroke-width="1.8" shape-rendering="auto"/></svg>
<div class="a" style="left:163px;top:997px;width:1750px;height:16px;background:#ececec"></div>
<div class="a" style="left:179px;top:998px;width:701px;height:14px;background:#c8c8c8"></div>
<svg class="a" style="left:166px;top:1001px" width="7" height="9" viewBox="0 0 7 9" shape-rendering="crispEdges"><path d="M5.5 1 L2 4.5 L5.5 8" fill="none" stroke="#555" stroke-width="1.8" shape-rendering="auto"/></svg>
<svg class="a" style="left:1886px;top:1001px" width="7" height="9" viewBox="0 0 7 9" shape-rendering="crispEdges"><path d="M1.5 1 L5 4.5 L1.5 8" fill="none" stroke="#555" stroke-width="1.8" shape-rendering="auto"/></svg>
<div class="a" style="left:0;top:1019px;width:1920px;height:21px;background:#ededed;border-top:1px solid #fff"></div>
<div class="st" style="left:2px;letter-spacing:0">Line:</div>
<div class="st" style="left:38px;letter-spacing:0">26</div>
<div class="st" style="left:96px;letter-spacing:0">Col:</div>
<div class="st" style="left:129px;letter-spacing:0">53</div>
<div class="st" style="left:186px;letter-spacing:0">Sel:</div>
<div class="st" style="left:219px;letter-spacing:0">0</div>
<div class="st" style="left:270px;letter-spacing:0">Lines:</div>
<div class="st" style="left:311px;letter-spacing:0">40</div>
<div class="st" style="left:369px;letter-spacing:0">Length:</div>
<div class="st" style="left:418px;letter-spacing:0">852</div>
<div class="st" style="left:484px;letter-spacing:0">Wstaw</div>
<div class="st" style="left:564px;letter-spacing:-0.15px">Done parsing in 0,078 seconds</div>
<div class="a" style="left:478px;top:1020px;width:1px;height:20px;background:#d0d0d0"></div><div class="a" style="left:558px;top:1020px;width:1px;height:20px;background:#d0d0d0"></div>
</body></html>
